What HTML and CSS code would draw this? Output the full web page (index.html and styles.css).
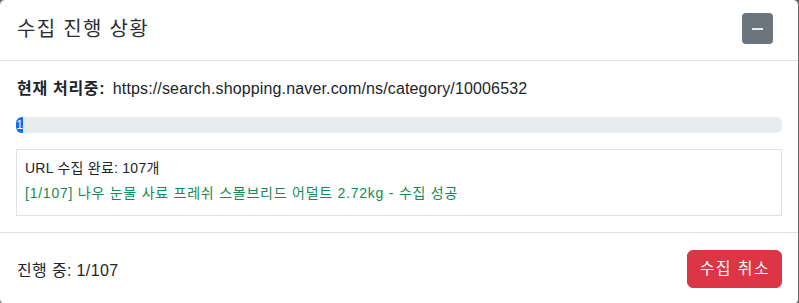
FILE: index.html
```html
<!DOCTYPE html>
<html lang="ko">
  <head>
    <meta charset="UTF-8" />
    <meta name="viewport" content="width=device-width, initial-scale=1.0" />
    <title>수집 진행 상황</title>

    <link rel="stylesheet" href="styles.css">
  </head>
  <body>
    <div class="modal">
      <div class="modal-header">
        <h5 class="modal-title">수집 진행 상황</h5>
        <button class="btn-min" type="button"><span class="minus"></span></button>
      </div>

      <div class="modal-body">
        <p class="current">
          <strong>현재 처리중:</strong>
          <span id="current-url">https://search.shopping.naver.com/ns/category/10006532</span>
        </p>

        <div class="progress">
          <div class="progress-bar">1</div>
        </div>

        <div class="log">
          <div class="log-line">URL 수집 완료: 107개</div>
          <div class="log-line log-success">[1/107] 나우 눈물 사료 프레쉬 스몰브리드 어덜트 2.72kg - 수집 성공</div>
        </div>
      </div>

      <div class="modal-footer">
        <span id="status">진행 중: 1/107</span>
        <button class="btn-cancel" type="button">수집 취소</button>
      </div>
    </div>
  </body>
</html>
```

FILE: styles.css
```css
* {
  margin: 0;
  padding: 0;
  box-sizing: border-box;
}

body {
  background-color: #5c5f63;
  font-family: "Liberation Sans", "Noto Sans CJK KR", sans-serif;
  color: #212529;
  overflow: hidden;
}

.modal {
  width: 800px;
  margin: -1px 0 0 -1px;
  background-color: #fff;
  border: 1px solid #6b6e72;
  border-radius: 6px;
}

.modal-header {
  display: flex;
  justify-content: space-between;
  align-items: center;
  padding: 13px 25px 16px 17px;
  border-bottom: 1px solid #dee2e6;
}

.modal-title {
  font-size: 20px;
  font-weight: 400;
  line-height: 30px;
  letter-spacing: 1.3px;
  color: #2b2f33;
}

.btn-min {
  width: 31px;
  height: 31px;
  border: none;
  border-radius: 4px;
  background-color: #6c757d;
  display: flex;
  justify-content: center;
  align-items: center;
}

.minus {
  display: block;
  width: 11px;
  height: 2px;
  background-color: #e9ecef;
}

.modal-body {
  padding: 16px;
}

.current {
  font-size: 16px;
  line-height: 24px;
  margin-left: 1px;
}

.current strong {
  font-weight: 700;
  margin-right: 3px;
  letter-spacing: 0.7px;
}

#current-url {
  letter-spacing: 0.15px;
}

.progress {
  margin-top: 16px;
  height: 16px;
  background-color: #e9ecef;
  border-radius: 6px;
  overflow: hidden;
  display: flex;
}

.progress-bar {
  width: 7px;
  background-color: #0d6efd;
  color: #fff;
  font-size: 12px;
  line-height: 16px;
  text-align: center;
  white-space: nowrap;
}

.log {
  margin-top: 16px;
  border: 1px solid #dee2e6;
  padding: 8px 8px 7px;
  font-size: 14px;
  line-height: 21px;
}

.log-line {
  margin-bottom: 4px;
  letter-spacing: 0.25px;
}

.log-success {
  color: #198754;
  letter-spacing: 0.76px;
}

.modal-footer {
  display: flex;
  justify-content: space-between;
  align-items: center;
  padding: 17px 16px 16px 17px;
  border-top: 1px solid #dee2e6;
  font-size: 16px;
}

#status {
  letter-spacing: 0.35px;
}

.btn-cancel {
  font-family: inherit;
  font-size: 16px;
  line-height: 24px;
  padding: 6px 11px 6px 12px;
  letter-spacing: 1.4px;
  color: #fff;
  background-color: #dc3545;
  border: 1px solid #dc3545;
  border-radius: 6px;
}
```
